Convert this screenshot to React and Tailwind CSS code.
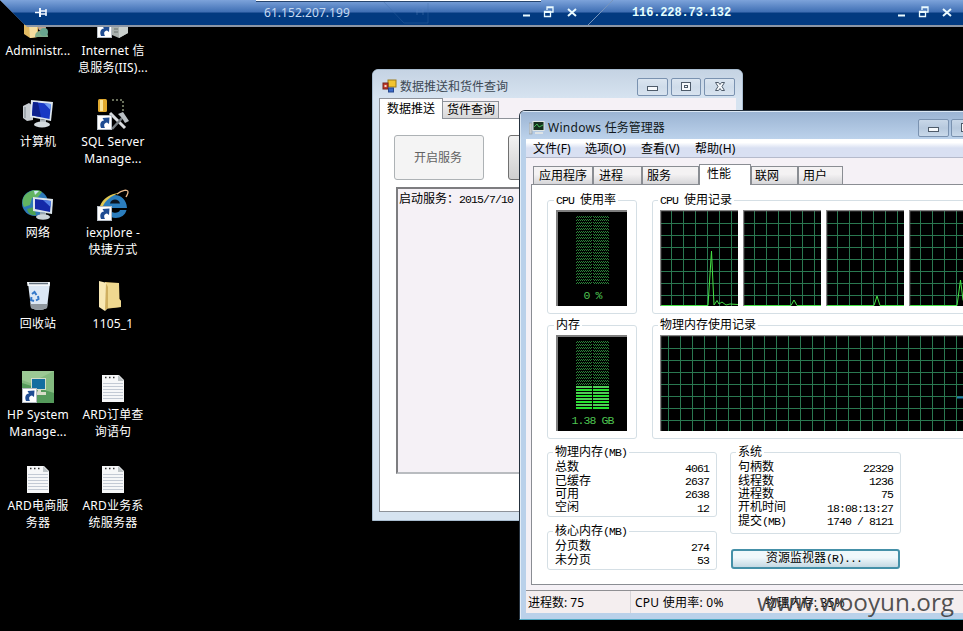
import React from "react";

const UI = "font-['Noto_Sans','Noto_Sans_CJK_SC',sans-serif]";
const SONG = "font-['Liberation_Mono','Noto_Sans_CJK_SC',monospace]";

// Half-width runs advance 6px per character, full-width ones 12px.
function Song({ children, className = "" }) {
  const parts = String(children).match(/[\x20-\x7e]+|[^\x20-\x7e]+/g) || [];
  return (
    <span className={`${SONG} whitespace-pre text-[12px] ${className}`}>
      {parts.map((p, i) => (
        <span key={i} className={/[\x20-\x7e]/.test(p) ? "text-[11.5px] tracking-[-0.9px]" : ""}>{p}</span>
      ))}
    </span>
  );
}

/* ---------- desktop icons ---------- */
function Shortcut({ y = 17 }) {
  return (
    <g transform={`translate(0 ${y})`}>
      <rect x=".5" y=".5" width="14" height="14" fill="#fff" stroke="#b5bcc4" />
      <path d="M4 13C2.500 9 3.500 6 7 5.500L5.500 3L12.500 2.500L12 9L10 7.500C7 8 6.500 10 8 13Z" fill="#1f4c92" />
    </g>
  );
}
const svgProps = { width: 32, height: 32, viewBox: "0 0 32 32" };

const UserIcon = () => (
  <svg {...svgProps}>
    <path d="M2 2H16V30L8 31L2 27Z" fill="#e2ba62" /><path d="M6 4L15 18V30L8 31Z" fill="#f5dda0" />
    <circle cx="20" cy="20" r="4" fill="#c3a58c" /><path d="M13 30C13 24 17 24 20 24S26 26 26 30Z" fill="#7fae8c" />
    <circle cx="22" cy="25" r="4" fill="#68a58f" />
  </svg>
);
const IisIcon = () => (
  <svg {...svgProps}>
    <path d="M15 10L25 7L31 10V26L22 31L15 28Z" fill="#a9b0ad" /><path d="M22 12L31 10V26L22 31Z" fill="#c9cfcc" />
    <path d="M17 16H21M17 19H21M17 22H21M17 25H21" stroke="#6a726e" /><Shortcut y={16} />
  </svg>
);
const ComputerIcon = () => (
  <svg {...svgProps}>
    <path d="M1 8L7 5L11 8V22L5 23L1 20Z" fill="#c8cdd2" /><path d="M3 9V20" stroke="#7f878f" />
    <path d="M9 2L31 4L29 23L8 19Z" fill="#dfe8ef" /><path d="M11 4L29 6L27.500 21L10 17.500Z" fill="#1839c4" />
    <path d="M11 4L16 4.500L19 19L10 17.500Z" fill="#0c218d" /><path d="M22 5.200L29 6L28.500 12Z" fill="#6f9df2" />
    <path d="M18 21L24 22V25H18Z" fill="#aab3ba" /><ellipse cx="20" cy="26.500" rx="8" ry="3" fill="#d3dade" />
  </svg>
);
const SqlIcon = () => (
  <svg {...svgProps}>
    <rect x="1" y="1" width="9" height="13" rx="1.500" fill="#e0a92e" /><rect x="3" y="2" width="3" height="11" fill="#f9e39a" />
    <path d="M15 2H26V13" fill="none" stroke="#8b9478" strokeWidth="1.500" strokeDasharray="2 2" />
    <path d="M13 15L28 30" stroke="#d8dbde" strokeWidth="3" /><path d="M27 18L15 31" stroke="#747b80" strokeWidth="2.500" />
    <path d="M21 16L26 14L32 23L28 25L25 20Z" fill="#b9bfc3" /><Shortcut />
  </svg>
);
const NetworkIcon = () => (
  <svg {...svgProps}>
    <circle cx="13" cy="14" r="13" fill="#2d79b8" />
    <path d="M3 6C9 0 17 0 20 3L16 8L10 9L8 16L2 18C0 14 0 10 3 6Z" fill="#62b462" />
    <path d="M5 20L12 18L14 26C9 27 6 24 5 20Z" fill="#4ca052" /><path d="M12 2L17 2L13 6Z" fill="#cfe9f5" />
    <path d="M11 8L31 10L30 25L11 22Z" fill="#dbe5ec" /><path d="M13 10L29 12L28 23L13 20Z" fill="#1429a8" />
    <path d="M21 11L29 12L28.500 18Z" fill="#527fe4" /><path d="M18 23L24 24V27H18Z" fill="#9aa5ae" />
    <ellipse cx="21" cy="28" rx="7" ry="2.800" fill="#cdd5da" />
  </svg>
);
const IeIcon = () => (
  <svg {...svgProps}>
    <path d="M30 19H13C13 25 22 25 23 21H29.500C27 33 6 31 6 17S29 1 30 19Z" fill="#2b7dbd" />
    <path d="M13 14.500H23C22 9 14 9 13 14.500Z" fill="#0a1420" />
    <path d="M20 5C25 1 31 0 31 3C31 5 30 6 29 8" fill="none" stroke="#e9b98c" strokeWidth="1.300" />
    <path d="M3 17C6 9 13 5 22 4C14 7 9 11 6 17Z" fill="#dfc653" /><Shortcut />
  </svg>
);
const BinIcon = () => (
  <svg {...svgProps}>
    <path d="M6 3H28L25 28Q17 32 9 28Z" fill="#dce8f5" /><path d="M5 2H28L27.500 6H5.500Z" fill="#f4f8fb" />
    <path d="M7 3.500H26" stroke="#65727f" strokeWidth="1.500" /><path d="M8.500 24L25.500 24L25 28Q17 32 9 28Z" fill="#90989f" />
    <path d="M10 14L12.500 12L14.500 15M16 16L16.500 19L14 20.500M12 21L9 20L9.500 17" fill="none" stroke="#3478c9" strokeWidth="2" />
  </svg>
);
const FolderIcon = () => (
  <svg {...svgProps}>
    <g transform="translate(0 -1)">
      <path d="M8 3L22 4L22.500 20L24 22V28L8 30Z" fill="#e5c878" /><path d="M10 4L22 4V20L24 22V28L10 29Z" fill="#efd88f" />
      <path d="M2 2L10 4V30L8 32L2 28Z" fill="#f8e8b4" /><path d="M9 4L11 8V29L8 31Z" fill="#cfaf60" />
    </g>
  </svg>
);
const HpIcon = () => (
  <svg {...svgProps}>
    <rect width="32" height="32" fill="#84ba80" /><path d="M0 12L32 22V32H0Z" fill="#559a5b" />
    <path d="M0 0H32L8 12L0 9Z" fill="#9bc894" />
    <rect x="9.500" y="7.500" width="14" height="11" fill="#136ea0" stroke="#d4dec9" /><path d="M16 19H19V21H24V24H14Z" fill="#d9ddc9" />
    <Shortcut />
  </svg>
);
const NoteIcon = () => (
  <svg {...svgProps}>
    <path d="M5 4H22L27 9V31H5Z" fill="#f6f7f8" /><path d="M21 4L27 10H21Z" fill="#bfc5c8" />
    <path d="M8 6.500H20" stroke="#333" strokeWidth="1.500" strokeDasharray="1.500 2.500" />
    <path d="M6 12.500H26M6 15.500H26M6 18.500H26M6 21.500H26M6 24.500H26M6 27.500H26" stroke="#c3cad4" />
  </svg>
);

const desktop = [
  [UserIcon, "Administr..."], [IisIcon, "Internet 信", "息服务(IIS)..."],
  [ComputerIcon, "计算机"], [SqlIcon, "SQL Server", "Manage..."],
  [NetworkIcon, "网络"], [IeIcon, "iexplore -", "快捷方式"],
  [BinIcon, "回收站"], [FolderIcon, "1105_1"],
  [HpIcon, "HP System", "Manage..."], [NoteIcon, "ARD订单查", "询语句"],
  [NoteIcon, "ARD电商服", "务器"], [NoteIcon, "ARD业务系", "统服务器"],
];

function Desktop() {
  return (
    <div className="grid w-[150px] auto-rows-[91px] grid-cols-[75px_75px] pt-[7px]">
      {desktop.map(([Icon, ...lines], i) => (
        <div key={i} className={`flex flex-col items-center ${UI} text-[12px] leading-[17px] tracking-[0.2px] whitespace-nowrap text-white`}>
          <Icon />
          <div className="pt-[3px] pl-[1px] text-center">{lines.map((l) => <div key={l}>{l}</div>)}</div>
        </div>
      ))}
    </div>
  );
}

/* ---------- remote connection bar ---------- */
function BarButtons() {
  return (
    <svg width="56" height="14" viewBox="0 0 56 14" className="shrink-0" fill="none" stroke="#eafaff">
      <path d="M1 9.500H8" strokeWidth="2" />
      <path d="M25 4V1H31V6H29M25 1.500H31" strokeWidth="1.300" /><path d="M22.500 5.500H28.500V10.500H22.500ZM22 6.300H29" strokeWidth="1.300" />
      <path d="M46 3L54 10M54 3L46 10" strokeWidth="2" />
    </svg>
  );
}
function RemoteBar() {
  return (
    <div className="absolute top-0 left-0 flex h-[27px] w-[963px] bg-[#8c96a5] [clip-path:polygon(0_0,100%_0,100%_100%,27px_100%)]">
      <div className="flex h-[25px] w-full items-center bg-linear-to-b from-[#7da3da] from-0% via-[#3f6fb4] via-48% to-[#023a80] to-52%">
        <svg width="14" height="12" viewBox="0 0 14 12" className="ml-[34px] shrink-0" fill="none" stroke="#f2f8ff">
          <path d="M1 5.500H6" strokeWidth="1.500" /><path d="M6 1V10" strokeWidth="2" /><path d="M7 4H12.500M7 7H12.500" strokeWidth="1.600" /><path d="M12 2V9" strokeWidth="1.500" />
        </svg>
        <span className={`ml-[216px] w-[90px] shrink-0 ${UI} text-[12px] tracking-[0.05px] whitespace-nowrap text-[#c5d9f2]`}>61.152.207.199</span>
        <svg width="96" height="25" viewBox="0 0 96 25" className="ml-[22px] shrink-0">
          <path d="M6 0L28 23H52V3" fill="none" stroke="#3e6ca9" opacity=".35" /><path d="M40 12H47M41 9V15M47 9V15" stroke="#5f88c0" opacity=".4" />
        </svg>
        <div className="ml-[50px] flex"><BarButtons /></div>
        <svg width="30" height="25" viewBox="0 0 30 25" className="ml-[9px] shrink-0"><path d="M1 25L26 0" stroke="#7794bb" /></svg>
        <span className="ml-[15px] w-[100px] shrink-0 font-['Liberation_Mono',monospace] text-[12px] font-bold tracking-[-0.13px] whitespace-nowrap text-[#e4ffff]">116.228.73.132</span>
        <div className="ml-[165px] flex"><BarButtons /></div>
      </div>
      <div className="absolute top-0 left-[256px] h-[2px] w-[285px] border-b border-[#27456e] bg-white" />
    </div>
  );
}

/* ---------- caption buttons ---------- */
function CapButton({ kind, w, tone = "from-[#c8d7e8] via-[#b7c9de] to-[#c9d9ea]" }) {
  return (
    <div className={`flex h-[18px] shrink-0 items-center justify-center rounded-[2px] border border-[#7a92b0] bg-linear-to-b ${tone} ${w}`}>
      <svg width="14" height="12" viewBox="0 0 14 12" fill="#f6f9fc" stroke="#4e5b6a">
        {kind === "min" && <rect x="1.500" y="5.500" width="10" height="4" />}
        {kind === "max" && <><rect x="2.500" y="1.500" width="9" height="8" /><rect x="5.500" y="4.500" width="3" height="2" /></>}
        {kind === "close" && <path d="M2.500 1.500H5.500L7 3.500L8.500 1.500H11.500L9 5.500L11.500 9.500H8.500L7 7.500L5.500 9.500H2.500L5 5.500Z" />}
      </svg>
    </div>
  );
}

/* ---------- data push window ---------- */
const pale = "from-[#dbe5f0] via-[#cfdcea] to-[#d8e3ef]";

function PushWindow() {
  return (
    <div className="absolute top-[69px] left-[372px] flex h-[452px] w-[371px] flex-col overflow-hidden rounded-t-[6px] border border-[#a8bccf] bg-[#d6e3f0] px-[6px] pb-[8px]">
      <div className="-mx-[6px] flex h-[28px] shrink-0 bg-linear-to-b from-[#c5d3e3] to-[#d6e3f0] px-[6px] pt-[8px]">
        <svg width="15" height="15" viewBox="0 0 15 15" className="mt-[1px] ml-[3px] shrink-0">
          <rect x="6" y="1" width="8" height="7" fill="#f2c430" stroke="#9c7b18" /><rect x="1" y="4" width="5" height="6" fill="#c23a2c" stroke="#75221a" />
          <rect x="2.500" y="6" width="2" height="2" fill="#f6d9cc" /><rect x="6.500" y="9" width="5" height="4" fill="#3b6bc9" stroke="#24478d" />
        </svg>
        <span className={`ml-[3px] ${UI} text-[12px] leading-[17px] whitespace-nowrap text-[#3d4854]`}>数据推送和货件查询</span>
        <div className="ml-auto flex gap-[3px] pr-[1px]">
          <CapButton kind="min" w="w-[31px]" tone={pale} /><CapButton kind="max" w="w-[30px]" tone={pale} /><CapButton kind="close" w="w-[31px]" tone={pale} />
        </div>
      </div>
      <div className="flex min-h-0 flex-1 flex-col bg-[#f5f1f6]">
        <div className="flex h-[21px] shrink-0 items-end">
          <div className="z-10 flex h-[21px] w-[64px] items-start border border-b-0 border-[#8e9299] bg-white pt-[2px] pl-[7px]"><Song className="leading-[18px]">数据推送</Song></div>
          <div className="flex h-[18px] w-[56px] items-start border border-b-0 border-l-0 border-[#8e9299] bg-linear-to-b from-[#f3f1f2] to-[#d5d5d7] pt-[1px] pl-[4px]"><Song className="leading-[16px]">货件查询</Song></div>
        </div>
        <div className="-mt-px flex-1 border border-[#8e9299] bg-white pt-[16px] pl-[14px]">
          <div className="flex gap-[24px]">
            <div className={`flex h-[45px] w-[90px] shrink-0 items-center justify-center rounded-[3px] border border-[#adb2b5] bg-[#f4f4f4] pr-[2px] ${UI} text-[12px] text-[#626262]`}>开启服务</div>
            <div className="h-[45px] w-[90px] shrink-0 rounded-[3px] border border-[#707070] bg-linear-to-b from-[#f2f2f2] to-[#cfcfcf]" />
          </div>
          <div className="mt-[7px] ml-[2px] flex h-[287px] w-[320px] items-start border-2 border-t-[#7d7d80] border-r-[#e2e2e2] border-b-[#b9bcc0] border-l-[#7d7d80] bg-[#f5f1f6] pt-[3px] pl-[1px]">
            <Song className="leading-[15px]">启动服务：2015/7/10</Song>
          </div>
        </div>
      </div>
    </div>
  );
}

/* ---------- task manager ---------- */
function Group({ title, className, children }) {
  return (
    <fieldset className={`min-w-0 shrink-0 rounded-[3px] border border-[#d5dfe5] ${className}`}>
      <legend className="ml-[-2px] flex h-[12px] items-start bg-white px-[2px]"><Song className="mt-px leading-[12px] text-black">{title}</Song></legend>
      {children}
    </fieldset>
  );
}

function Meter({ fill, label, id }) {
  const rows = Array.from({ length: 8 }, (_, i) => i);
  return (
    <div className="flex h-[96px] w-[71px] flex-col items-center border-t-2 border-l-2 border-[#7f7f7f] bg-black pt-[4px]">
      <svg width="35" height="69" viewBox="0 0 35 69" shapeRendering="crispEdges" className="mr-[1px] shrink-0">
        <defs>
          <pattern id={id} width="2" height="3" patternUnits="userSpaceOnUse">
            <rect width="1" height="1" fill="#2a8239" /><rect x="1" y="1" width="1" height="1" fill="#2a8239" />
          </pattern>
        </defs>
        <rect x="1" width="16" height="69" fill={`url(#${id})`} /><rect x="18" width="16" height="69" fill={`url(#${id})`} />
        {fill && <rect y="45" width="35" height="24" fill="#000" />}
        {fill && rows.map((i) => (
          <g key={i} fill={i % 2 ? "#25e32f" : "#50cf56"}>
            <rect x="1" y={45 + i * 3} width="16" height="2" /><rect x="18" y={45 + i * 3} width="16" height="2" />
          </g>
        ))}
      </svg>
      <div className="mt-[4px] flex h-[13px] shrink-0"><Song className="leading-[13px] text-[#4fc552]">{label}</Song></div>
    </div>
  );
}

function Graph({ width, first, line, dash }) {
  const vs = [];
  for (let x = first; x < width; x += 12) vs.push(x);
  return (
    <svg width={width} height="96" viewBox={`0 0 ${width} 96`} className="shrink-0">
      <rect width={width} height="96" fill="#000" />
      <g fill="#2a7850" shapeRendering="crispEdges">
        {vs.map((x) => <rect key={x} x={x} y="1" width="1" height="95" />)}
        {[13, 25, 37, 49, 61, 73, 85].map((y) => <rect key={y} x="1" y={y} width={width} height="1" />)}
      </g>
      {line && <path d={line} fill="none" stroke="#45e345" />}
      {dash && <path d={dash} stroke="#1f7dab" strokeWidth="2" />}
      <path d={`M0 .5H${width}M.5 0V96`} stroke="#858585" fill="none" strokeWidth="1.500" />
    </svg>
  );
}

function Rows({ data }) {
  return (
    <div className="flex flex-col pt-[4px] pr-[7px]">
      {data.map(([k, v]) => (
        <div key={k} className="flex h-[13.400px] items-center justify-between">
          <Song className="leading-[13px] text-black">{k}</Song><Song className="leading-[13px] text-black">{v}</Song>
        </div>
      ))}
    </div>
  );
}

const tabs = [
  ["应用程序", "w-[60px] pl-[5px]"], ["进程", "w-[49px] pl-[5px]"], ["服务", "w-[57px] pl-[4px]"],
  ["性能", "w-[52px] pl-[7px]", true], ["联网", "w-[47px] pl-[3px]"], ["用户", "w-[45px] pl-[4px]"],
];
const menus = [["文件", "(F)", "w-[52px]"], ["选项", "(O)", "w-[56px]"], ["查看", "(V)", "w-[54px]"], ["帮助", "(H)", "w-[54px]"]];

function TaskManager() {
  return (
    <div className="absolute top-[110px] left-[519px] flex h-[510px] w-[480px] flex-col overflow-hidden rounded-tl-[6px] border border-[#25313e] border-b-[#4fa9c4] bg-[#bad1ea] pl-[6px] shadow-[inset_1px_1px_0_#e3edf7]">
      <div className="-ml-[6px] flex h-[28px] shrink-0 bg-linear-to-b from-[#9ab3d2] to-[#bcd2eb] pl-[9px] shadow-[inset_1px_1px_0_#dce8f4]">
        <svg width="16" height="14" viewBox="0 0 16 14" className="mt-[10px] shrink-0">
          <rect x="0" y="2" width="3" height="11" fill="#c8cdd0" stroke="#89949b" strokeWidth=".6" />
          <rect x="4" y=".5" width="11" height="9" fill="#15301d" stroke="#dfe5e5" /><path d="M5 6L8 3L10 6L14 4" fill="none" stroke="#43b95a" />
          <path d="M6 12H14" stroke="#dde3e6" strokeWidth="2" />
        </svg>
        <span className={`ml-[3px] ${UI} pt-[8px] text-[12px] leading-[18px] whitespace-nowrap text-[#101820]`}>
          <span className="tracking-[0.3px]">Windows </span>任务管理器
        </span>
        <div className="mt-[8px] ml-auto flex gap-[2px] pr-[17px]">
          <CapButton kind="min" w="w-[31px]" /><CapButton kind="max" w="w-[30px]" />
        </div>
      </div>
      <div className={`flex h-[19px] shrink-0 border-b border-[#b5bacb] bg-linear-to-b from-white from-20% to-[#d9e0f2] to-50% pl-[7px] ${UI} text-[12px] leading-[19px] text-black`}>
        {menus.map(([a, b, w]) => <span key={a} className={`${w} shrink-0 whitespace-nowrap`}>{a}<span className="tracking-[0.1px]">{b}</span></span>)}
      </div>
      <div className="flex min-h-0 flex-1 flex-col bg-[#f5f1f6] pt-[6px] pl-[5px]">
        <div className="flex h-[21px] shrink-0 items-end pl-[2px]">
          {tabs.map(([t, c, on]) => (
            <div key={t} className={`flex shrink-0 items-start border border-b-0 border-[#8a8d93] ${c} ${on ? "z-10 h-[21px] bg-white pt-[1px]" : "h-[19px] bg-linear-to-b from-[#f4f2f3] from-40% to-[#d3d3d6] pt-[2px]"}`}>
              <Song className={on ? "leading-[18px]" : "leading-[17px]"}>{t}</Song>
            </div>
          ))}
        </div>
        <div className="-mt-px flex h-[401px] shrink-0 flex-col border border-[#8a8d93] bg-white pt-[9px] pl-[15px]">
          <div className="flex gap-[15px]">
            <Group title="CPU 使用率" className="h-[120px] w-[90px] pt-[4px] pl-[8px]"><Meter id="cpu" label="0 %" /></Group>
            <Group title="CPU 使用记录" className="h-[120px] w-[400px] overflow-hidden pt-[4px] pl-[7px]">
              <div className="flex gap-[5px]">
                <Graph width={78} first={11} line="M0 95.500H48L51.500 41L54 95L57 90.500L59 94L62 92L66 95L70 94L78 94.500" />
                <Graph width={78} first={11} line="M0 95.500H48L51 90L54 95.500H78" />
                <Graph width={78} first={11} line="M0 95.500H48L51 86L54 95.500H78" />
                <Graph width={78} first={11} line="M0 95.500H48L51.500 70L54 90L57 95.500H78" />
              </div>
            </Group>
          </div>
          <div className="mt-[5px] flex gap-[15px]">
            <Group title="内存" className="h-[120px] w-[90px] pt-[4px] pl-[8px]"><Meter id="mem" fill label="1.38 GB" /></Group>
            <Group title="物理内存使用记录" className="h-[120px] w-[400px] overflow-hidden pt-[4px] pl-[7px]">
              <Graph width={327} first={8} dash="M297 62.500H327" />
            </Group>
          </div>
          <div className="mt-[7px] flex gap-[13px]">
            <div className="flex flex-col gap-[8px]">
              <Group title="物理内存(MB)" className="h-[71px] w-[170px] pl-[7px]">
                <Rows data={[["总数", "4061"], ["已缓存", "2637"], ["可用", "2638"], ["空闲", "12"]]} />
              </Group>
              <Group title="核心内存(MB)" className="h-[45px] w-[170px] pl-[7px]"><Rows data={[["分页数", "274"], ["未分页", "53"]]} /></Group>
            </div>
            <div className="flex flex-col">
              <Group title="系统" className="h-[88px] w-[171px] pl-[7px]">
                <Rows data={[["句柄数", "22329"], ["线程数", "1236"], ["进程数", "75"], ["开机时间", "18:08:13:27"], ["提交(MB)", "1740 / 8121"]]} />
              </Group>
              <div className="mt-[15px] ml-px flex h-[20px] w-[169px] items-center rounded-[3px] border-2 border-[#4590a8] bg-linear-to-b from-[#f0f8fb] from-40% to-[#c5d9e3] pl-[33px]">
                <Song className="leading-[16px] text-black">资源监视器(R)...</Song>
              </div>
            </div>
          </div>
        </div>
      </div>
      <div className={`flex h-[23px] shrink-0 border-t border-[#8f8f93] bg-[#f4eeef] ${UI} text-[12px] leading-[23px] whitespace-nowrap text-black`}>
        <span className="w-[105px] shrink-0 border-r border-[#d8d5d8] pl-[2px]">进程数: 75</span>
        <span className="w-[134px] shrink-0 pl-[4px] tracking-[0.25px]">CPU 使用率: 0%</span>
        <span className="tracking-[0.2px]">物理内存: 35%</span>
      </div>
      <div className="h-[6px] shrink-0" />
    </div>
  );
}

export default function App() {
  return (
    <div className="relative h-[631px] w-[963px] overflow-hidden bg-black">
      <Desktop />
      <PushWindow />
      <TaskManager />
      <RemoteBar />
      <div className="absolute top-[585px] left-[757px] font-['Open_Sans',sans-serif] text-[24.300px] leading-[34px] whitespace-nowrap text-[#3c3c3c]/90">www.wooyun.org</div>
    </div>
  );
}
